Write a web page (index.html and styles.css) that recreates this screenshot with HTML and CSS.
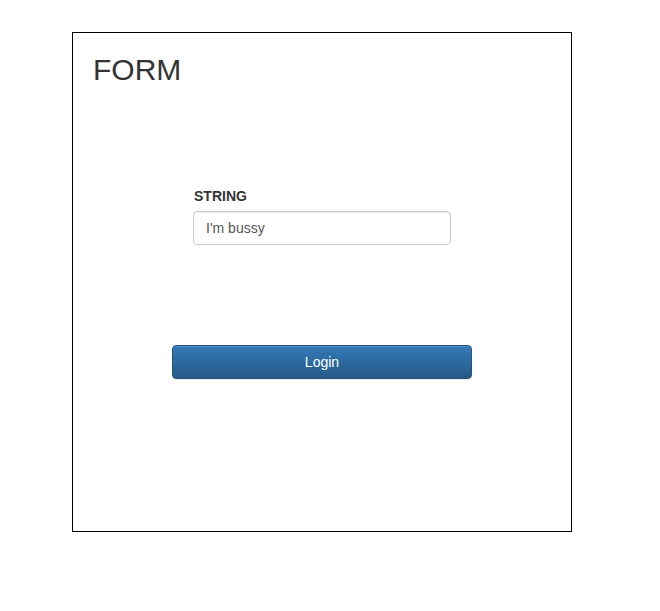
FILE: index.html
```html
<!DOCTYPE html>
<html>
<head>
<meta charset="utf-8">
<title>Form</title>
<link rel="stylesheet" href="styles.css">
</head>
<body>
<div class="panel">
  <h3 class="title">FORM</h3>
  <div class="form">
    <div class="group">
      <label class="label" for="s">STRING</label>
      <input class="input" id="s" type="text" value="I'm bussy">
    </div>
    <button class="btn" type="button">Login</button>
  </div>
</div>
</body>
</html>
```

FILE: styles.css
```css
html, body {
  margin: 0;
  padding: 0;
  background: #fff;
}
body {
  font-family: "Liberation Sans", Arial, sans-serif;
  font-size: 14px;
  line-height: 20px;
  color: #333;
  padding: 32px 0 0 72px;
}
.panel {
  box-sizing: border-box;
  width: 500px;
  height: 500px;
  border: 1px solid #000;
  padding: 20px 0 0 20px;
}
.title {
  margin: 0;
  font-size: 30px;
  line-height: 33px;
  font-weight: 400;
  color: #333;
}
.form {
  display: flex;
  flex-direction: column;
  align-items: center;
  margin-top: 100px;
  margin-left: -20px;
}
.group {
  display: flex;
  flex-direction: column;
  width: 258px;
}
.label {
  font-weight: 700;
  font-size: 14px;
  line-height: 20px;
  margin: 0 0 5px 1px;
  color: #333;
}
.input {
  box-sizing: border-box;
  width: 258px;
  height: 34px;
  padding: 6px 12px;
  font-family: "Liberation Sans", Arial, sans-serif;
  font-size: 14px;
  color: #555;
  border: 1px solid #ccc;
  border-radius: 4px;
  box-shadow: inset 0 1px 1px rgba(0,0,0,.075);
  background: #fff;
  outline: none;
}
.btn {
  box-sizing: border-box;
  width: 300px;
  height: 34px;
  margin-top: 100px;
  padding: 6px 12px;
  font-family: "Liberation Sans", Arial, sans-serif;
  font-size: 14px;
  color: #fff;
  border: 1px solid #245580;
  border-radius: 4px;
  background: linear-gradient(to bottom, #337ab7 0, #265a88 100%);
  box-shadow: inset 0 1px 0 rgba(255,255,255,.15), 0 1px 1px rgba(0,0,0,.075);
}
```
